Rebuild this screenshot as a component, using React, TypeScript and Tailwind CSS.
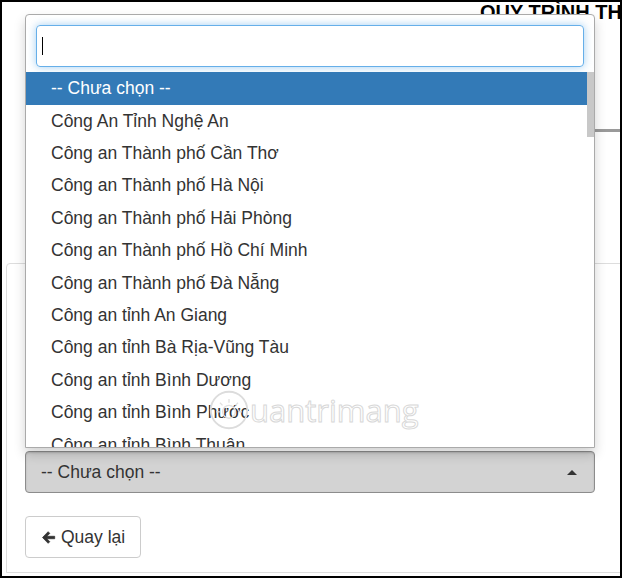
import React from 'react';

const OPTIONS = [
    'Công An Tỉnh Nghệ An',
    'Công an Thành phố Cần Thơ',
    'Công an Thành phố Hà Nội',
    'Công an Thành phố Hải Phòng',
    'Công an Thành phố Hồ Chí Minh',
    'Công an Thành phố Đà Nẵng',
    'Công an tỉnh An Giang',
    'Công an tỉnh Bà Rịa-Vũng Tàu',
    'Công an tỉnh Bình Dương',
    'Công an tỉnh Bình Phước',
    'Công an tỉnh Bình Thuận',
    'Công an tỉnh Bình Định',
];

const ArrowLeft = () => (
    <svg width="15" height="15" viewBox="0 0 16 16" className="shrink-0">
        <path
            d="M7.6 1.8 L1.6 8 L7.6 14.2 L9.4 12.4 L6.2 9.3 H14.6 V6.7 H6.2 L9.4 3.6 Z"
            fill="#333"
            stroke="#333"
            strokeWidth="0.8"
            strokeLinejoin="round"
        />
    </svg>
);

const Watermark = () => (
    <div className="absolute left-[182px] top-[317px] flex items-center pointer-events-none">
        <svg width="42" height="42" viewBox="0 0 46 46">
            <circle cx="23" cy="23" r="20" fill="none" stroke="#dcdcdc" strokeWidth="2" />
            <circle cx="23" cy="25" r="7" fill="none" stroke="#e0e0e0" strokeWidth="1.5" />
            {[180, 225, 270, 315, 0].map(a => (
                <line
                    key={a}
                    x1={23 + Math.cos((a * Math.PI) / 180) * 10}
                    y1={25 + Math.sin((a * Math.PI) / 180) * 10}
                    x2={23 + Math.cos((a * Math.PI) / 180) * 14}
                    y2={25 + Math.sin((a * Math.PI) / 180) * 14}
                    stroke="#e0e0e0"
                    strokeWidth="1.5"
                />
            ))}
        </svg>
        <span className="font-['Open_Sans',sans-serif] text-[31px] leading-none tracking-[0px] text-transparent [-webkit-text-stroke:1px_#d8d8d8]">
            uantrimang
        </span>
    </div>
);

export default function App() {
    return (
        <div className="relative w-[622px] h-[578px] border-2 border-black bg-white overflow-hidden font-['Liberation_Sans',Arial,sans-serif] text-[#333]">
            {/* page behind the dropdown */}
            <div className="pl-[478px] whitespace-nowrap text-[20px] leading-[20px] font-bold text-black">
                QUY TRÌNH THỰC HIỆN
            </div>
            <div className="ml-[300px] mt-[107px] h-[3px] bg-[#9a9a9a]" />
            <div className="ml-[4px] mt-[131px] w-[660px] h-[310px] border border-[#ddd] rounded-tl-[4px] pl-[18px] pt-[187px]">
                <div className="w-[570px] h-[42px] bg-[#d3d3d3] border border-[#8c8c8c] rounded-[4px] shadow-[inset_0_1px_2px_rgba(0,0,0,0.15)] flex items-center justify-between pl-[15px] pr-[17px] text-[17.5px]">
                    <span>-- Chưa chọn --</span>
                    <span className="w-0 h-0 border-l-[5px] border-r-[5px] border-b-[5px] border-l-transparent border-r-transparent border-b-[#333]" />
                </div>
                <button className="mt-[23px] w-[116px] h-[42px] border border-[#ccc] rounded-[4px] bg-white flex items-center gap-[5px] pl-[15px] text-[17.5px] text-[#333]">
                    <ArrowLeft />
                    <span>Quay lại</span>
                </button>
            </div>

            {/* open dropdown */}
            <div className="absolute left-[23px] top-[12px] w-[570px] h-[434px] bg-white border border-[#aaa] rounded-t-[4px] shadow-[0_6px_12px_rgba(0,0,0,0.18)]">
                <div className="px-[10px] pt-[10px]">
                    <div className="h-[42px] border border-[#66afe9] rounded-[4px] shadow-[0_0_8px_rgba(102,175,233,0.6)] flex items-center pl-[5px]">
                        <span className="w-px h-[18px] bg-black" />
                    </div>
                </div>
                <div className="relative mt-[5px] h-[375px] overflow-hidden flex">
                    <div className="flex-1 text-[17.5px]">
                        <div className="h-[32.6px] flex items-center pl-[25px] bg-[#337ab7] text-white">-- Chưa chọn --</div>
                        {OPTIONS.map(o => (
                            <div key={o} className="h-[32.4px] flex items-center pl-[25px]">
                                {o}
                            </div>
                        ))}
                    </div>
                    <div className="w-[7px] shrink-0">
                        <div className="h-[65px] bg-[#c8c8c8]" />
                    </div>
                    <Watermark />
                </div>
            </div>
        </div>
    );
}
